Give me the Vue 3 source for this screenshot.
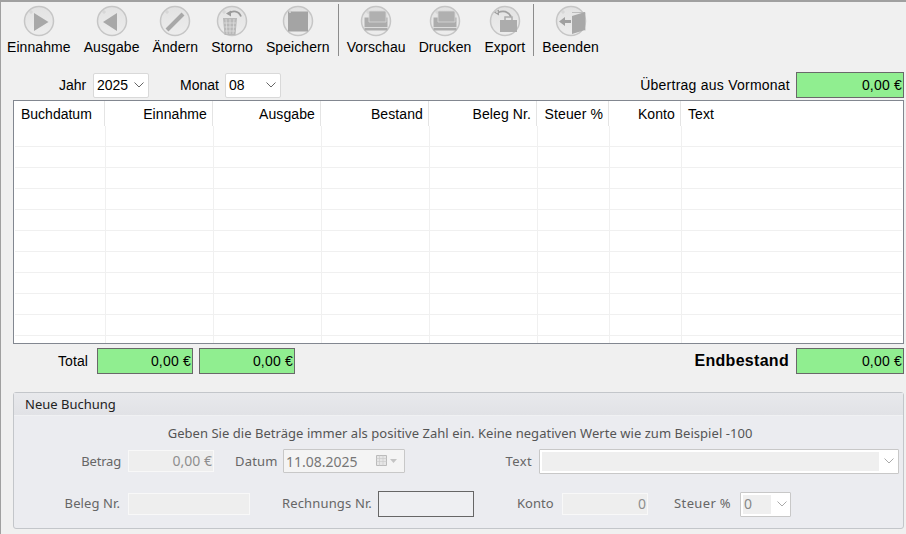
<script setup>
const G = '#a8a8a8'
const printer = [
  { d: 'M4.500 12.500h23v13h-23z', fill: '#acacac' },
  { d: 'M10 6h14.500q1.500 0 1.500 1.500V17H9V7.500Q9 6 10 6z', fill: '#b0b0b0', stroke: '#d4d4d4', w: 0.9 },
  { d: 'M4 22.500h24', stroke: '#dcdcdc', w: 1 },
]
const groups = [
  [
    { label: 'Einnahme', shapes: [{ d: 'M11 8l14.500 9L11 26z', fill: G }] },
    { label: 'Ausgabe', shapes: [{ d: 'M21 8L7 17l14 9z', fill: G }] },
    { label: 'Ändern', shapes: [{ d: 'M8 25L24 9', stroke: G, w: 4 }] },
    {
      label: 'Storno',
      shapes: [
        { d: 'M7 13h14l-1.500 17H8.500z', fill: '#b8b8b8' },
        { d: 'M10 14l1 15M14 14v15M18 14l-1 15M8 18h12M8.500 22h11M9 26h10', stroke: '#dedede', w: 0.8 },
        { d: 'M13 8.500c4-3.500 10-2.500 12 3', stroke: '#9a9a9a', w: 1.800 },
        { d: 'M10 8.500l5-3v6z', fill: '#9a9a9a' },
      ],
    },
    { label: 'Speichern', shapes: [{ d: 'M6 6.500h20v20H6z', fill: '#a4a4a4' }] },
  ],
  [
    { label: 'Vorschau', shapes: printer },
    { label: 'Drucken', shapes: printer },
    {
      label: 'Export',
      shapes: [
        { d: 'M11 15h17v12H11z', fill: '#acacac' },
        { d: 'M16 15v-3h7v3', stroke: '#acacac', w: 1.500 },
        { d: 'M9 7.500c5-2 10-1 13 4', stroke: '#a0a0a0', w: 1.800 },
        { d: 'M5 7.500l5-3v6z', fill: '#a0a0a0' },
      ],
    },
  ],
  [
    {
      label: 'Beenden',
      shapes: [
        { d: 'M17 7.500h13v18', stroke: '#bcbcbc', w: 1 },
        { d: 'M17 11l13-4v18l-13 4z', fill: '#a8a8a8' },
        { d: 'M4 16.500l6-4.500v3h6v3h-6v3z', fill: '#a0a0a0' },
      ],
    },
  ],
]
const headers = [
  { text: 'Buchdatum' },
  { text: 'Einnahme', right: true },
  { text: 'Ausgabe', right: true },
  { text: 'Bestand', right: true },
  { text: 'Beleg Nr.', right: true },
  { text: 'Steuer %', right: true },
  { text: 'Konto', right: true },
  { text: 'Text' },
]
const rows = 11
</script>

<template>
  <div class="win">
    <div class="toolbar">
      <template v-for="(group, gi) in groups" :key="gi">
        <div v-if="gi" class="sep"></div>
        <div class="tgroup">
          <div v-for="item in group" :key="item.label" class="tool">
            <svg class="ico" width="32" height="32" viewBox="0 0 32 32">
              <defs>
                <linearGradient :id="'g' + gi + item.label" x1="0" y1="0" x2="0" y2="1">
                  <stop offset="0" stop-color="#e2e2e2" />
                  <stop offset="1" stop-color="#ededed" />
                </linearGradient>
              </defs>
              <circle cx="16" cy="16" r="14.500" :fill="'url(#g' + gi + item.label + ')'" stroke="#c6c6c6" stroke-width="1.500" />
              <path
                v-for="(s, si) in item.shapes"
                :key="si"
                :d="s.d"
                :fill="s.fill || 'none'"
                :stroke="s.stroke || 'none'"
                :stroke-width="s.w || 0"
              />
              <circle cx="8" cy="7" r="1" fill="#fff" stroke="#999" stroke-width=".4" />
            </svg>
            <span>{{ item.label }}</span>
          </div>
        </div>
      </template>
    </div>

    <div class="filter">
      <span class="l-jahr">Jahr</span>
      <div class="sel sel-jahr">2025<svg class="chev" width="10" height="6" viewBox="0 0 10 6"><path d="M.5.500L5 5 9.500.500" fill="none" stroke="#666" /></svg></div>
      <span class="l-monat">Monat</span>
      <div class="sel sel-monat">08<svg class="chev" width="10" height="6" viewBox="0 0 10 6"><path d="M.5.500L5 5 9.500.500" fill="none" stroke="#666" /></svg></div>
      <span class="l-uebertrag">Übertrag aus Vormonat</span>
      <div class="money m-wide">0,00 €</div>
    </div>

    <div class="table">
      <div class="thead">
        <div v-for="h in headers" :key="h.text" class="th" :class="{ right: h.right }">{{ h.text }}</div>
      </div>
      <div v-for="r in rows" :key="r" class="tr">
        <div v-for="c in 8" :key="c" class="td"></div>
      </div>
    </div>

    <div class="totals">
      <span class="l-total">Total</span>
      <div class="money m-a">0,00 €</div>
      <div class="money m-b">0,00 €</div>
      <span class="l-end">Endbestand</span>
      <div class="money m-wide">0,00 €</div>
    </div>

    <section class="panel">
      <header class="panel-head">Neue Buchung</header>
      <p class="notice">Geben Sie die Beträge immer als positive Zahl ein. Keine negativen Werte wie zum Beispiel -100</p>
      <div class="frow r1">
        <span class="lab lab-first lab-betrag">Betrag</span>
        <div class="inp i-betrag">0,00 €</div>
        <span class="lab lab-datum">Datum</span>
        <div class="date">
          <span>11.08.2025</span>
          <svg class="cal" width="23" height="12" viewBox="0 0 23 12">
            <path d="M.5.500h10v10H.5z" fill="#e6e6e6" stroke="#bbb" />
            <path d="M.5 3.500h10M.5 6.500h10M3.500.5v10M7 .5v10" stroke="#ccc" stroke-width=".7" fill="none" />
            <path d="M14 4h7l-3.500 4z" fill="#c4c4c4" />
          </svg>
        </div>
        <span class="lab lab-text">Text</span>
        <div class="combo c-text">
          <div class="combo-fill"></div>
          <svg width="10" height="6" viewBox="0 0 10 6"><path d="M.5.500L5 5 9.500.500" fill="none" stroke="#aaa" /></svg>
        </div>
      </div>
      <div class="frow r2">
        <span class="lab lab-first lab-beleg">Beleg Nr.</span>
        <div class="inp i-beleg"></div>
        <span class="lab lab-rech">Rechnungs Nr.</span>
        <div class="inp-dark"></div>
        <span class="lab lab-konto">Konto</span>
        <div class="inp i-konto">0</div>
        <span class="lab lab-steuer">Steuer %</span>
        <div class="combo c-steuer">
          <div class="combo-fill">0</div>
          <svg width="10" height="6" viewBox="0 0 10 6"><path d="M.5.500L5 5 9.500.500" fill="none" stroke="#aaa" /></svg>
        </div>
      </div>
    </section>
  </div>
</template>

<style scoped>
.win {
  width: 906px;
  height: 534px;
  box-sizing: border-box;
  overflow: hidden;
  background: #f0f0f0;
  border-top: 2px solid #a0a0a0;
  border-left: 1px solid #a0a0a0;
  font: 14px "Liberation Sans", Arial, sans-serif;
  color: #000;
}
.toolbar {
  display: flex;
  height: 70px;
  padding-left: 6px;
  box-sizing: border-box;
}
.tgroup {
  display: flex;
  gap: 13px;
}
.tool {
  display: flex;
  flex-direction: column;
  align-items: center;
  padding-top: 3px;
}
.ico {
  display: block;
  filter: blur(0.35px);
}
.tool span {
  margin-top: 2px;
  line-height: 16px;
  white-space: nowrap;
  letter-spacing: 0.08px;
}
.sep {
  width: 1px;
  height: 52px;
  margin: 2px 8px 0;
  background: #8c8c8c;
}
.filter,
.totals {
  display: flex;
  align-items: center;
  height: 26px;
  padding-left: 12px;
}
.l-jahr {
  margin-left: 46px;
  width: 34px;
}
.sel {
  display: flex;
  align-items: center;
  justify-content: space-between;
  box-sizing: border-box;
  height: 25px;
  padding: 0 4px 0 3px;
  background: #fff;
  border: 1px solid #d9d9d9;
  border-radius: 2px;
}
.chev {
  flex: none;
}
.sel-jahr {
  width: 56px;
}
.l-monat {
  margin-left: 31px;
  width: 45px;
}
.sel-monat {
  width: 56px;
  padding-right: 4px;
}
.l-uebertrag {
  margin-left: auto;
  margin-right: 6px;
  white-space: nowrap;
  letter-spacing: 0.24px;
}
.money {
  box-sizing: border-box;
  height: 26px;
  line-height: 24px;
  padding-right: 1px;
  background: #90ee90;
  border: 1px solid #696969;
  text-align: right;
  letter-spacing: 0.2px;
}
.m-wide {
  width: 108px;
  margin-right: 2px;
}
.m-a,
.m-b {
  width: 96px;
}
.m-b {
  margin-left: 6px;
}
.table {
  box-sizing: border-box;
  width: 891px;
  height: 244px;
  margin: 2px 0 4px 12px;
  background: #fff;
  border: 1px solid #828790;
  overflow: hidden;
}
.thead,
.tr {
  display: grid;
  grid-template-columns: 91px repeat(4, 108px) 72px 72px 1fr;
}
.thead {
  height: 25px;
}
.th {
  box-sizing: border-box;
  padding: 5px 5px 0 6px;
  line-height: 16px;
  border-right: 1px solid #e4e4e4;
  white-space: nowrap;
  letter-spacing: 0.1px;
}
.th:first-child {
  padding-left: 7px;
  letter-spacing: 0;
}
.th:last-child {
  padding-left: 7px;
  border-right: 0;
}
.right {
  text-align: right;
}
.tr {
  height: 21px;
  box-sizing: border-box;
  margin-left: 1px;
  margin-right: 1px;
  border-bottom: 1px solid #f0f0f0;
}
.td {
  border-right: 1px solid #f0f0f0;
}
.td:last-child {
  border-right: 0;
}
.l-total {
  margin-left: 45px;
  width: 39px;
  letter-spacing: 0.1px;
}
.l-end {
  margin-left: auto;
  margin-right: 7px;
  font-size: 16px;
  font-weight: 700;
  letter-spacing: 0.3px;
}
.panel {
  box-sizing: border-box;
  width: 891px;
  height: 137px;
  margin: 18px 0 0 12px;
  background: #ebecf0;
  border: 1px solid #c3c6ca;
  border-radius: 3px;
  color: #555;
  font: 13px "Noto Sans", "Liberation Sans", sans-serif;
}
.panel-head {
  height: 22px;
  line-height: 22px;
  padding-left: 11px;
  background: linear-gradient(#e8e9ec, #e1e2e6);
  border-bottom: 1px solid #f0f1f3;
  color: #222;
}
.notice {
  margin: 8px 0 0;
  padding-left: 3px;
  height: 18px;
  line-height: 18px;
  text-align: center;
  color: #555;
  letter-spacing: 0.04px;
}
.frow {
  display: flex;
  align-items: center;
}
.r1 {
  height: 26px;
  margin-top: 6px;
}
.r2 {
  height: 26px;
  margin-top: 17px;
}
.r2 .lab {
  padding-bottom: 2px;
}
.lab {
  flex: none;
  text-align: right;
  white-space: nowrap;
  color: #666;
}
.lab-first {
  width: 106px;
  margin-right: 8px;
}
.lab-betrag {
  width: 107px;
  margin-right: 7px;
  letter-spacing: -0.2px;
}
.lab-beleg {
  letter-spacing: 0.1px;
}
.inp {
  box-sizing: border-box;
  height: 22px;
  line-height: 20px;
  padding-right: 1px;
  background: #eeeeee;
  border: 1px solid #f8f8f8;
  text-align: right;
  color: #8e8e8e;
  font-size: 14px;
}
.i-betrag {
  width: 86px;
}
.i-beleg {
  width: 122px;
}
.i-konto {
  width: 86px;
}
.lab-datum {
  width: 42px;
  margin: 0 6px 0 21px;
  letter-spacing: 0.2px;
}
.date {
  display: flex;
  align-items: center;
  justify-content: space-between;
  box-sizing: border-box;
  width: 122px;
  height: 24px;
  padding: 0 3px 0 2px;
  background: #f4f4f4;
  border: 1px solid #c8c8c8;
  border-radius: 1px;
  color: #777;
  font-size: 14px;
}
.cal {
  flex: none;
  margin-right: 2px;
}
.lab-text {
  width: 27px;
  margin: 0 7px 0 100px;
  letter-spacing: 0.4px;
}
.combo {
  display: flex;
  align-items: center;
  box-sizing: border-box;
  padding: 2px 4px 2px 2px;
  background: #fff;
  border: 1px solid #c8c8c8;
  border-radius: 1px;
}
.combo svg {
  flex: none;
  margin-left: 5px;
}
.combo-fill {
  flex: 1;
  align-self: stretch;
  background: #efefef;
  line-height: 18px;
  color: #888;
  padding-left: 1px;
  font-size: 14px;
}
.c-text {
  width: 360px;
  height: 25px;
}
.c-steuer {
  width: 51px;
  height: 25px;
  padding-right: 3px;
}
.c-steuer svg {
  margin-left: 6px;
}
.lab-rech {
  width: 90px;
  margin: 0 6px 0 32px;
  letter-spacing: 0.15px;
}
.inp-dark {
  box-sizing: border-box;
  width: 96px;
  height: 26px;
  background: #eeeff2;
  border: 1px solid #666;
}
.lab-konto {
  width: 36px;
  margin: 0 9px 0 43px;
}
.lab-steuer {
  width: 57px;
  margin: 0 9px 0 26px;
  letter-spacing: 0.35px;
}
</style>
